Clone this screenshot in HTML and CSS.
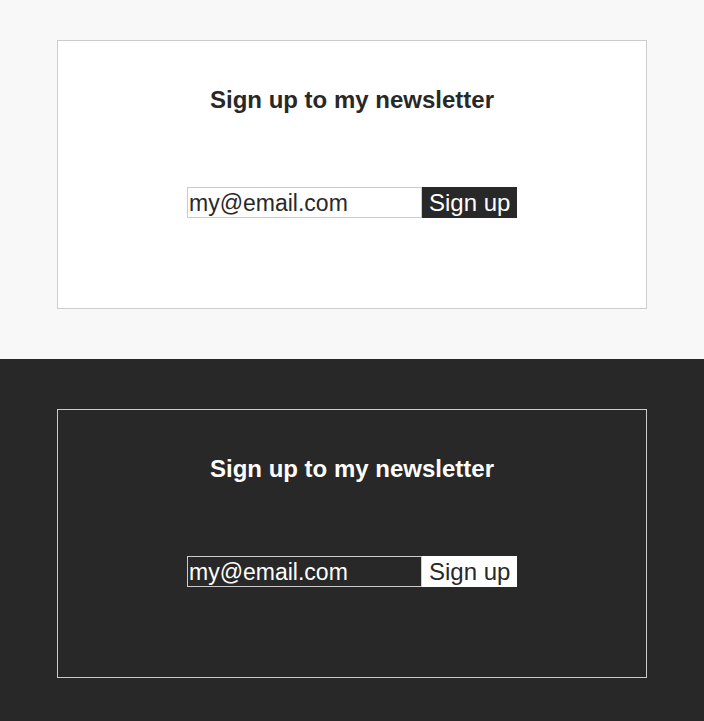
FILE: index.html
```html
<!DOCTYPE html>
<html lang="en">
<head>
<meta charset="utf-8">
<title>Newsletter</title>
<link rel="stylesheet" href="styles.css">
</head>
<body>
<section class="section section--light">
  <div class="card">
    <h2 class="card__title">Sign up to my newsletter</h2>
    <form class="signup">
      <input class="signup__input" type="email" value="my@email.com">
      <button class="signup__button" type="button">Sign up</button>
    </form>
  </div>
</section>
<section class="section section--dark">
  <div class="card">
    <h2 class="card__title">Sign up to my newsletter</h2>
    <form class="signup">
      <input class="signup__input" type="email" value="my@email.com">
      <button class="signup__button" type="button">Sign up</button>
    </form>
  </div>
</section>
</body>
</html>
```
FILE: styles.css
```css
* { box-sizing: border-box; }
html, body { margin: 0; padding: 0; }
body {
  font-family: "Liberation Sans", Arial, Helvetica, sans-serif;
  width: 704px;
  overflow: hidden;
}
.section {
  padding: 50px 0 50px;
}
.section--light {
  background: #f8f8f8;
  padding-top: 40px;
  color: #282828;
}
.section--dark {
  background: #282828;
  color: #ffffff;
}
.card {
  width: 590px;
  height: 269px;
  margin: 0 auto;
  border: 1px solid #cccccc;
  padding-top: 45px;
  display: flex;
  flex-direction: column;
  align-items: center;
}
.section--light .card { background: #ffffff; }
.section--dark .card { background: #282828; }
.card__title {
  margin: 0;
  font-size: 24px;
  line-height: 28px;
  font-weight: 700;
}
.signup {
  margin-top: 73px;
  display: flex;
  height: 31px;
}
.signup__input {
  width: 235px;
  height: 31px;
  margin: 0;
  border: 1px solid #cccccc;
  padding: 1px 1px 0;
  font-family: inherit;
  font-size: 23px;
  outline: none;
}
.signup__button {
  width: 95px;
  height: 31px;
  margin: 0;
  border: 0;
  padding: 0 5px 0 7px;
  font-family: inherit;
  font-size: 24px;
  text-align: left;
}
.section--light .signup__input { background: #ffffff; color: #282828; }
.section--light .signup__button { background: #282828; color: #ffffff; }
.section--dark .signup__input { background: #282828; color: #ffffff; }
.section--dark .signup__button { background: #ffffff; color: #282828; }
```
